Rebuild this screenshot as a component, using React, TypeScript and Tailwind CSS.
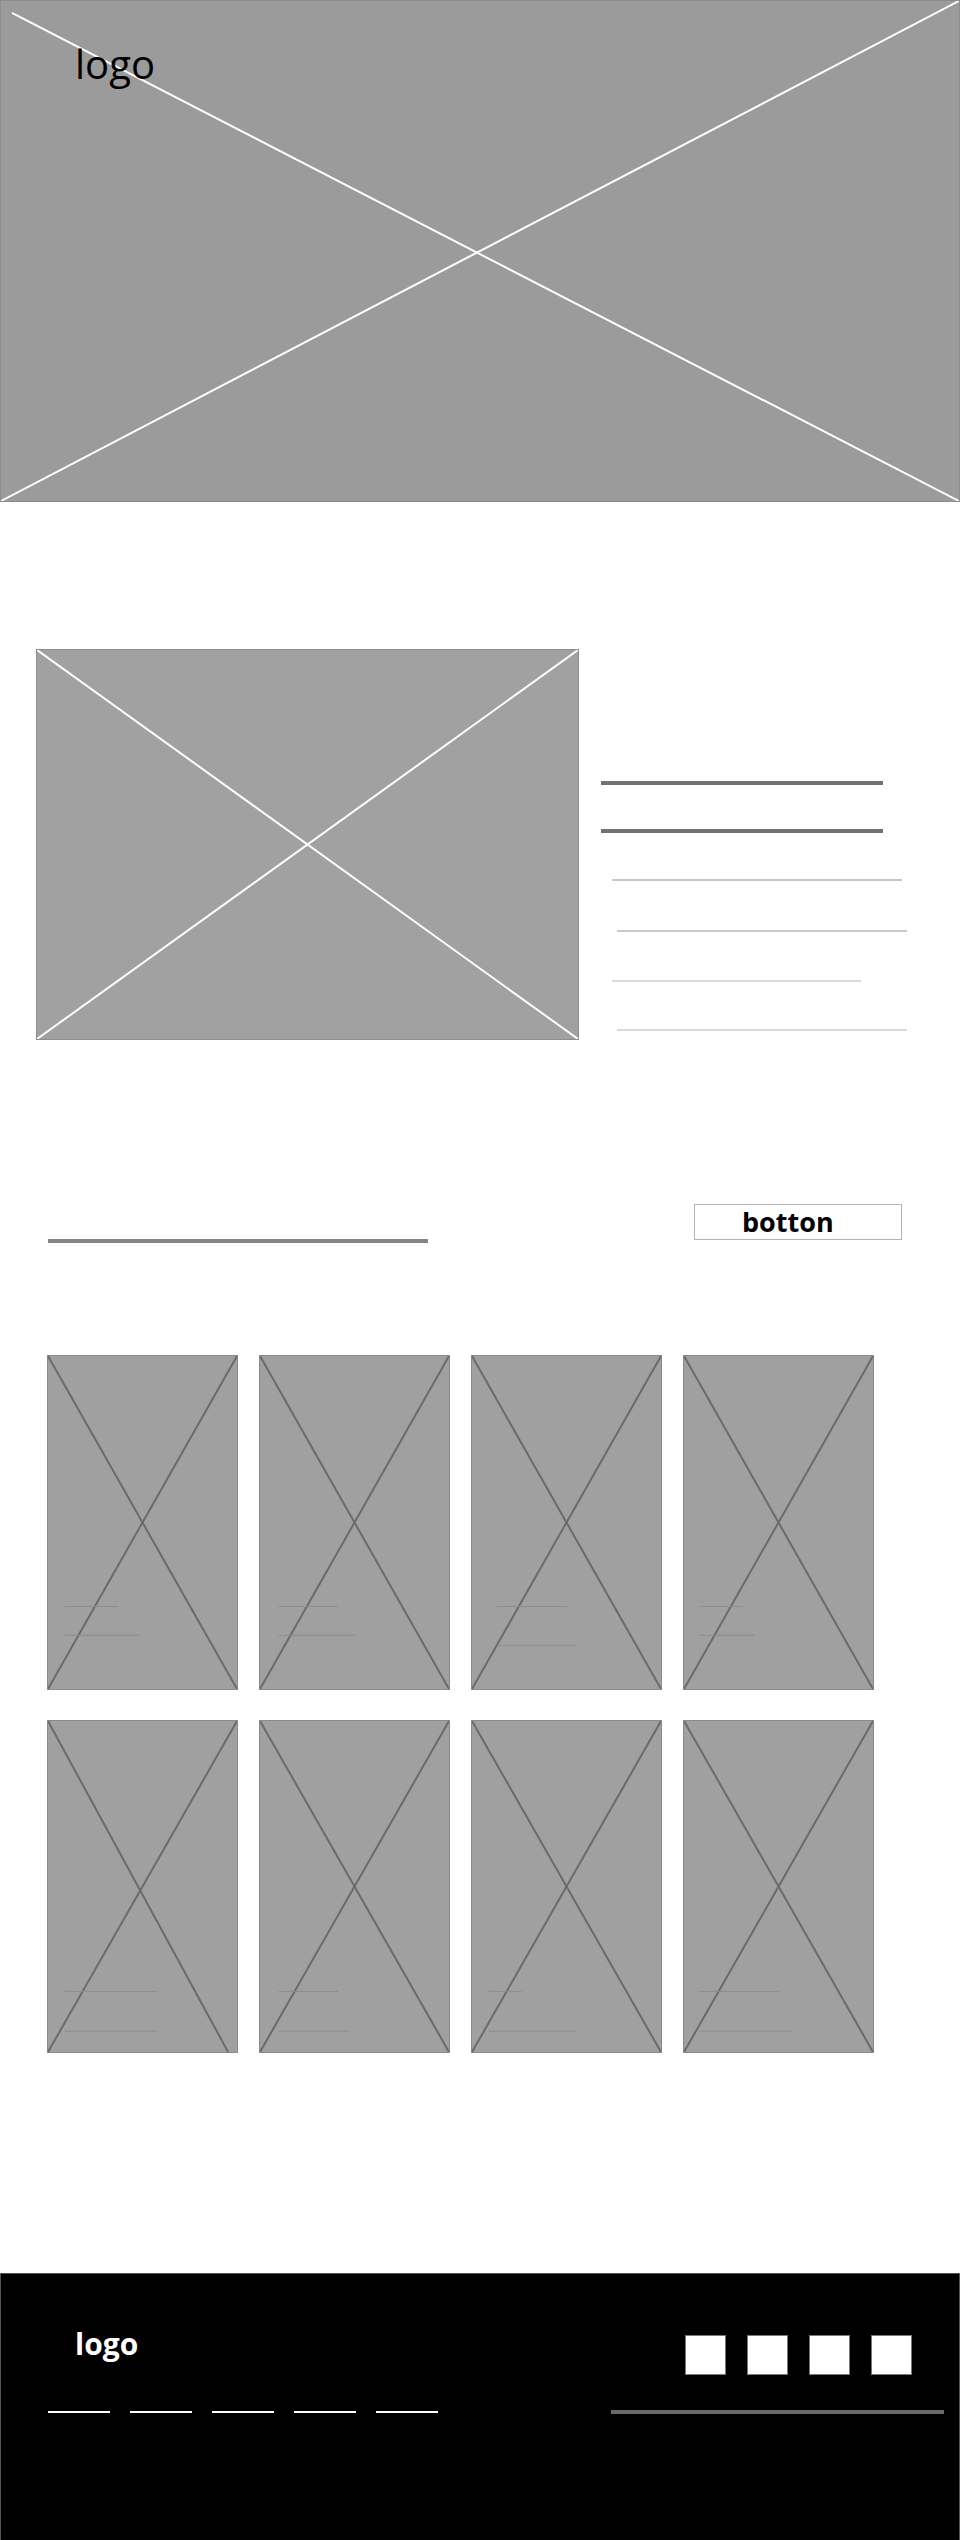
import React from "react";

type Line = { x: number; w: number; y: number };
type Card = { lines: Line[]; shortTL?: number };

const row1: Card[] = [
  { lines: [{ x: 17, w: 54, y: 252 }, { x: 17, w: 75, y: 281 }] },
  { lines: [{ x: 19, w: 60, y: 252 }, { x: 19, w: 77, y: 281 }] },
  { lines: [{ x: 25, w: 71, y: 252 }, { x: 26, w: 80, y: 291 }] },
  { lines: [{ x: 16, w: 42, y: 252 }, { x: 16, w: 55, y: 281 }] },
];
const row2: Card[] = [
  { lines: [{ x: 17, w: 93, y: 272 }, { x: 17, w: 93, y: 312 }], shortTL: 9 },
  { lines: [{ x: 19, w: 60, y: 272 }, { x: 19, w: 70, y: 312 }] },
  { lines: [{ x: 17, w: 33, y: 272 }, { x: 17, w: 89, y: 312 }] },
  { lines: [{ x: 16, w: 80, y: 272 }, { x: 16, w: 93, y: 312 }] },
];

function CardBox({ card, h }: { card: Card; h: number }) {
  const w = 191;
  return (
    <div
      className="relative w-[191px] bg-[#a0a0a0] border border-[#8a8a8a]"
      style={{ height: h }}
    >
      <svg
        className="absolute inset-0 w-full h-full"
        viewBox={`0 0 ${w} ${h}`}
        preserveAspectRatio="none"
      >
        <line x1={0} y1={0} x2={w - (card.shortTL ?? 0)} y2={h} stroke="#6a6a6a" strokeWidth={2} />
        <line x1={0} y1={h} x2={w} y2={0} stroke="#6a6a6a" strokeWidth={2} />
        {card.lines.map((l, i) => (
          <line
            key={i}
            x1={l.x}
            y1={l.y}
            x2={l.x + l.w}
            y2={l.y}
            stroke="#8c8c8c"
            strokeWidth={1}
          />
        ))}
      </svg>
    </div>
  );
}

export default function App() {
  return (
    <div className="w-[960px] min-h-[2540px] bg-white" style={{ fontFamily: '"Open Sans", "Liberation Sans", sans-serif' }}>
      {/* Hero */}
      <div className="relative h-[502px] bg-[#9b9b9b] border border-[#8c8c8c]">
        <svg className="absolute inset-0 w-full h-full" viewBox="0 0 960 502" preserveAspectRatio="none">
          <line x1={11} y1={12} x2={960} y2={502} stroke="#ffffff" strokeWidth={2} />
          <line x1={0} y1={502} x2={960} y2={0} stroke="#ffffff" strokeWidth={2} />
        </svg>
        <div className="relative pl-[74px] pt-[43px] text-[40px] leading-[40px] font-normal text-black">logo</div>
      </div>

      {/* Feature section */}
      <div className="flex pt-[147px] pl-[36px]">
        <div className="relative w-[543px] h-[391px] bg-[#a1a1a1] border border-[#8d8d8d]">
          <svg className="absolute inset-0 w-full h-full" viewBox="0 0 543 391" preserveAspectRatio="none">
            <line x1={0} y1={0} x2={543} y2={391} stroke="#ffffff" strokeWidth={2} />
            <line x1={0} y1={391} x2={543} y2={0} stroke="#ffffff" strokeWidth={2} />
          </svg>
        </div>
        <div className="flex flex-col pl-[22px] pt-[132px]">
          <div className="w-[282px] h-[4px] bg-[#727272]" />
          <div className="w-[282px] h-[4px] bg-[#727272] mt-[44px]" />
          <div className="w-[290px] h-[2px] bg-[#c6c6c6] mt-[46px] ml-[11px]" />
          <div className="w-[290px] h-[2px] bg-[#c9c9c9] mt-[49px] ml-[16px]" />
          <div className="w-[249px] h-[2px] bg-[#dadada] mt-[48px] ml-[11px]" />
          <div className="w-[290px] h-[2px] bg-[#dadada] mt-[47px] ml-[16px]" />
        </div>
      </div>

      {/* Heading row with button */}
      <div className="flex justify-between items-start pt-[164px] pl-[48px] pr-[58px]">
        <div className="mt-[35px] w-[380px] h-[4px] bg-[#8a8383]" />
        <div className="w-[208px] h-[36px] border border-[#b4b4b4] bg-white pl-[47px] text-[27px] leading-[34px] font-bold text-black">
          botton
        </div>
      </div>

      {/* Cards */}
      <div className="pt-[112px] pl-[47px] flex flex-col gap-[30px]">
        <div className="flex gap-[21px]">
          {row1.map((c, i) => (
            <CardBox key={i} card={c} h={335} />
          ))}
        </div>
        <div className="flex gap-[21px]">
          {row2.map((c, i) => (
            <CardBox key={i} card={c} h={333} />
          ))}
        </div>
      </div>

      {/* Footer */}
      <div className="mt-[220px] h-[268px] bg-black border border-[#555555] pl-[47px] pr-[15px]">
        <div className="flex justify-between items-start pt-[55px] pr-[32px]">
          <div className="pl-[27px] text-[30px] leading-[30px] font-bold text-white">logo</div>
          <div className="flex gap-[21px] mt-[6px]">
            {[0, 1, 2, 3].map((i) => (
              <div key={i} className="w-[41px] h-[40px] bg-white border border-[#777777]" />
            ))}
          </div>
        </div>
        <div className="flex justify-between items-center mt-[35px]">
          <div className="flex gap-[20px]">
            {[0, 1, 2, 3, 4].map((i) => (
              <div key={i} className="w-[62px] h-[2px] bg-white" />
            ))}
          </div>
          <div className="w-[333px] h-[4px] bg-[#6a6a6a]" />
        </div>
      </div>
    </div>
  );
}
